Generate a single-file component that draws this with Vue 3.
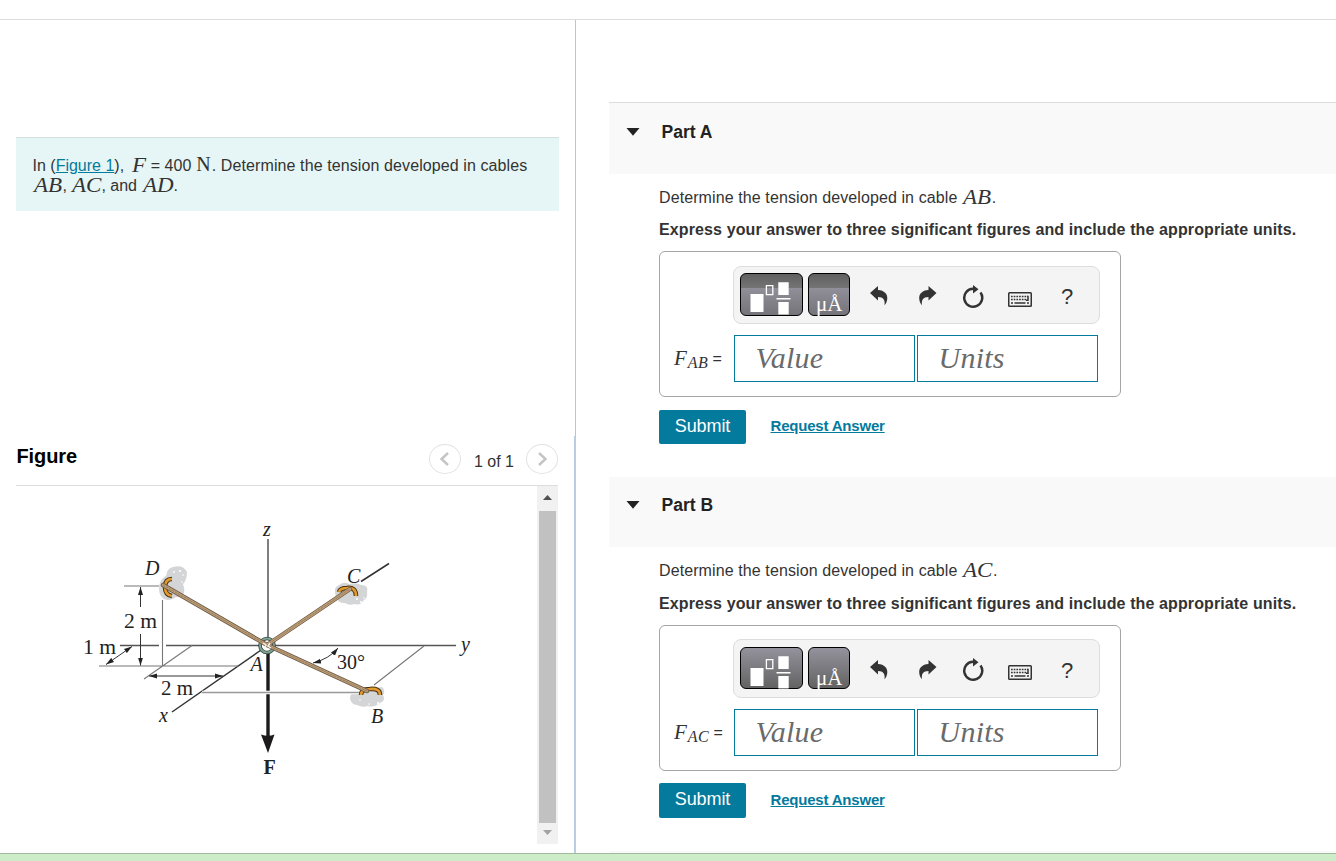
<script setup>
import { reactive } from 'vue';

const parts = reactive([
  { id: 'A', cable: 'AB', value: '', units: '', open: true },
  { id: 'B', cable: 'AC', value: '', units: '', open: true }
]);

// Collapse or expand a part
function togglePart(part) {
  part.open = !part.open;
}
</script>

<template>
  <div class="page">
    <div class="top-bar"></div>

    <div class="workspace">
      <!-- Problem statement and figure -->
      <section class="left-pane">
        <div class="problem">
          <span>In (<a href="#" class="link">Figure 1</a>),</span>
          <i class="math single">F</i>
          <span>= 400</span>
          <span class="newton">N</span><span class="rest">. Determine the tension developed in cables</span>
          <br />
          <i class="math">AB</i>, <i class="math wide">AC</i>, and <i class="math">AD</i>.
        </div>

        <div class="figure-header">
          <h2>Figure</h2>
          <div class="pager">
            <button type="button" class="pager-btn" aria-label="Previous">
              <svg width="32" height="30" viewBox="0 0 32 30"><path d="M19 9l-6.500 6 6.500 6" /></svg>
            </button>
            <span class="pager-text">1 of 1</span>
            <button type="button" class="pager-btn" aria-label="Next">
              <svg width="32" height="30" viewBox="0 0 32 30"><path d="M13 9l6.500 6-6.500 6" /></svg>
            </button>
          </div>
        </div>

        <div class="figure-view">
          <svg class="diagram" width="521" height="358" viewBox="16 486 521 358">
            <defs>
              <marker id="tip" viewBox="0 0 8 6" refX="8" refY="3" markerWidth="8" markerHeight="6" markerUnits="userSpaceOnUse" orient="auto-start-reverse">
                <path d="M0 0.500L8 3 0 5.500z" fill="#222" />
              </marker>
            </defs>

            <!-- Walls -->
            <g fill="#d3d5d7">
              <path d="M159 588q0-8 7-12 1-8 7-9 10-3 14 5 0 8-4 12 2 5 1 9-3 5-8 4-6 5-12 2-5-3-5-11z" />
              <path d="M335 593q-1-6 4-8 5-4 10-1 8-2 12 1 8 0 6 7 1 6-3 8-4 6-9 4-6 2-10-1-8 1-10-10z" />
              <path d="M350 698q0-6 8-7l24-4q4 4 1 8 3 6-3 8-6 5-12 3-6 2-11-1-6 0-7-7z" />
            </g>
            <g fill="#fff">
              <circle cx="174" cy="572" r=".9" /><circle cx="180" cy="571" r="1.100" /><circle cx="183" cy="575" r=".8" />
              <circle cx="182" cy="582" r=".8" /><circle cx="178" cy="592" r=".9" /><circle cx="357" cy="599" r="1" />
              <circle cx="361" cy="602" r="1" /><circle cx="364" cy="598" r=".8" /><circle cx="378" cy="703" r="1.100" />
              <circle cx="369" cy="704" r=".8" /><circle cx="360" cy="700" r=".8" />
            </g>

            <!-- Axes and construction lines -->
            <g stroke="#555" stroke-width="1.500" fill="none">
              <path d="M268 539V640" />
              <path d="M120 645.500H159M166 645.500H456" />
              <path d="M361 581.500L389 563.500M172 712L264 648" stroke="#333" />
            </g>
            <g stroke="#777" stroke-width="1.100" fill="none">
              <path d="M124 586H159M162.500 600V666M99 666H238M144 679L192 645.500M374 685L424 646" />
            </g>

            <!-- Dimensions -->
            <g stroke="#333" stroke-width="1" fill="none">
              <path d="M140.500 607V587" marker-end="url(#tip)" />
              <path d="M140.500 634V665.500" marker-end="url(#tip)" />
              <path d="M106 664.500L132 646.500" marker-start="url(#tip)" marker-end="url(#tip)" />
              <path d="M149 676H223" marker-start="url(#tip)" marker-end="url(#tip)" />
              <path d="M313 663Q329 659 338 648" marker-start="url(#tip)" marker-end="url(#tip)" />
            </g>

            <!-- Force -->
            <path d="M268 652V737" stroke="#1c1a1a" stroke-width="3.400" />
            <path d="M261 734.500Q268 737 274.500 734.500L268 753z" fill="#1c1a1a" />
            <path d="M202 692.500H364" stroke="#fff" stroke-width="3.500" />
            <path d="M202 692.500H364" stroke="#999" stroke-width="1.500" />

            <!-- Ring at A -->
            <circle cx="267" cy="645.500" r="7" fill="#fff" stroke="#34433f" stroke-width="3.600" />
            <circle cx="267" cy="645.500" r="7" fill="none" stroke="#7da394" stroke-width="2" />

            <!-- Anchors -->
            <g fill="none" stroke="#4a3210" stroke-width="4.600">
              <path d="M172 579q-7 0-7 8t7 9" />
              <path d="M339 592q1-4 8-4 9-1 9 8" />
              <path d="M361 695q0-6 9-6 10-1 10 6" />
            </g>
            <g fill="none" stroke="#e39a2d" stroke-width="2.600">
              <path d="M172 579q-7 0-7 8t7 9" />
              <path d="M339 592q1-4 8-4 9-1 9 8" />
              <path d="M361 695q0-6 9-6 10-1 10 6" />
            </g>

            <!-- Cables -->
            <g fill="none" stroke-linecap="round">
              <path d="M163 585L267 645L350 589M267 645L367 691" stroke="#6b5843" stroke-width="4.400" />
              <path d="M163 585L267 645L350 589M267 645L367 691" stroke="#bd9f78" stroke-width="2.800" />
              <path d="M163 585L267 645L350 589M267 645L367 691" stroke="#8f7354" stroke-width=".8" stroke-dasharray="2 1.500" />
            </g>
            <path d="M263 643l3 2-2 4M270 643l-2 3 3 2" fill="none" stroke="#f4f4f0" stroke-width="1.500" />

            <!-- Labels -->
            <g class="diagram-italic">
              <text x="263" y="536">z</text>
              <text x="145" y="575">D</text>
              <text x="347" y="583">C</text>
              <text x="250.500" y="671">A</text>
              <text x="461" y="651">y</text>
              <text x="371" y="722.500">B</text>
              <text x="159" y="722">x</text>
            </g>
            <g class="diagram-text">
              <text x="124" y="627.500" textLength="33" lengthAdjust="spacingAndGlyphs">2 m</text>
              <text x="83" y="653.500" textLength="33" lengthAdjust="spacingAndGlyphs">1 m</text>
              <text x="161" y="694.500" textLength="32" lengthAdjust="spacingAndGlyphs">2 m</text>
              <text x="337" y="669" textLength="28">30°</text>
              <text x="263.500" y="774" class="diagram-bold">F</text>
            </g>
          </svg>

          <div class="scrollbar">
            <svg width="21" height="25" viewBox="0 0 21 25"><path d="M6 14h9l-4.500-5z" fill="#505050" /></svg>
            <div class="scroll-thumb"></div>
            <svg width="21" height="21" viewBox="0 0 21 21"><path d="M6 7h9l-4.500 5z" fill="#a3a3a3" /></svg>
          </div>
        </div>
      </section>

      <div class="divider">
        <div class="divider-top"></div>
        <div class="divider-bottom"></div>
      </div>

      <!-- Answer parts -->
      <section class="right-pane">
        <article v-for="part in parts" :key="part.id" class="part" :class="'part-' + part.id.toLowerCase()">
          <header class="part-header" @click="togglePart(part)">
            <svg class="caret" width="14" height="8" viewBox="0 0 14 8"><path d="M0.500 0h13L7 7.800z" fill="#222" /></svg>
            <h3>Part {{ part.id }}</h3>
          </header>

          <div v-if="part.open" class="part-body">
            <p class="question"><span>Determine the tension developed in cable</span> <i class="math">{{ part.cable }}</i>.</p>
            <p class="instruction">Express your answer to three significant figures and include the appropriate units.</p>

            <div class="answer-box">
              <div class="toolbar">
                <button type="button" class="tool-dark templates" aria-label="Templates">
                  <svg width="61" height="41" viewBox="0 0 61 41">
                    <path d="M9.500 20h13v18h-13zM37.300 8.200h10.400v12.800h-10.400zM37.300 28h10.400v12.500h-10.400zM35.500 24h14v1.400h-14z" fill="#fff" />
                    <path d="M25.400 11.600h6.400v9h-6.400z" fill="none" stroke="#fff" stroke-width="1.300" />
                  </svg>
                </button>
                <button type="button" class="tool-dark symbols" aria-label="Symbols">
                  <svg width="40" height="41" viewBox="0 0 40 41">
                    <text x="7" y="37" textLength="26.500" lengthAdjust="spacingAndGlyphs">μÅ</text>
                  </svg>
                </button>
                <button type="button" class="tool undo" aria-label="Undo">
                  <svg width="18" height="20" viewBox="0 0 18 20"><path d="M0 7L8 0v4c6.500.4 9.300 4 9.300 8 0 3-1 5.200-2.800 7.300.7-5.400-1-8.100-6.500-8.300V14.500z" /></svg>
                </button>
                <button type="button" class="tool redo" aria-label="Redo">
                  <svg width="18" height="20" viewBox="0 0 18 20"><path d="M17.500 7L9.500 0v4C3 4.400.2 8 .2 12c0 3 1 5.200 2.800 7.300-.7-5.400 1-8.100 6.500-8.300V14.500z" /></svg>
                </button>
                <button type="button" class="tool reset" aria-label="Reset">
                  <svg width="22" height="23" viewBox="0 0 22 23">
                    <path d="M11 3.700a9 9 0 1 0 7.500 3.700" fill="none" stroke="#333" stroke-width="2.500" />
                    <path d="M11 0l5.500 4.200L11 8.500z" />
                  </svg>
                </button>
                <button type="button" class="tool keyboard" aria-label="Keyboard">
                  <svg width="24" height="15" viewBox="0 0 24 15">
                    <rect x=".75" y=".75" width="22.500" height="13.500" rx=".8" fill="none" stroke="#333" stroke-width="1.500" />
                    <path d="M3 4.500h17M3 7.500h15" fill="none" stroke="#333" stroke-width="1.600" stroke-dasharray="1.700 1" />
                    <path d="M3 11h2M6.500 11h11M19 11h2M20 3.700V8.300h-2" fill="none" stroke="#333" stroke-width="1.500" />
                  </svg>
                </button>
                <button type="button" class="tool help" aria-label="Help">?</button>
              </div>

              <div class="answer-row">
                <label class="answer-label"><i class="label-f">F</i><i class="label-sub">{{ part.cable }}</i><span>=</span></label>
                <input v-model="part.value" type="text" placeholder="Value" />
                <input v-model="part.units" type="text" placeholder="Units" />
              </div>
            </div>

            <div class="actions">
              <button type="button" class="submit">Submit</button>
              <a href="#" class="request">Request Answer</a>
            </div>
          </div>
        </article>
        <div class="next-part"></div>
      </section>
    </div>

    <div class="bottom-bar"></div>
  </div>
</template>

<style>
body {
  margin: 0;
  background-color: #fff;
  overflow: hidden;
}
</style>

<style scoped>
.page {
  width: 1336px;
  height: 861px;
  display: flex;
  flex-direction: column;
  overflow: hidden;
  font-family: "Liberation Sans", Arial, sans-serif;
  font-size: 16px;
  color: #333;
}

.page * {
  box-sizing: border-box;
}

button {
  font-family: inherit;
  padding: 0;
  border: none;
  background: none;
  cursor: pointer;
}

svg {
  display: block;
}

.top-bar {
  flex: none;
  height: 20px;
  border-bottom: 1px solid #ddd;
}

.workspace {
  flex: 1;
  min-height: 0;
  display: flex;
}

.bottom-bar {
  flex: none;
  height: 8px;
  border-top: 1px solid #9fbb9b;
  background-color: #cdecc8;
}

.left-pane {
  width: 574px;
  padding: 117px 15px 0 16px;
  display: flex;
  flex-direction: column;
}

.problem {
  height: 74px;
  padding: 18px 0 0 16.500px;
  border-top: 1px solid #d4dfdf;
  background-color: #e6f6f6;
  line-height: 20px;
  white-space: nowrap;
}

.link {
  color: #047a9c;
  text-decoration: underline;
}

.math {
  display: inline-block;
  margin: 0 4px 0 1.500px;
  font-family: "Liberation Serif", serif;
  font-size: 20px;
  line-height: 0;
  transform: translateY(0.600px) scaleX(1.150);
  transform-origin: left;
}

.math.single {
  margin: 0 7px 0 7.500px;
}

.math.wide {
  margin: 0 3.500px 0 1px;
}

.newton {
  margin-left: 5px;
  font-family: "Liberation Serif", serif;
  font-size: 20px;
  line-height: 0;
}

.rest {
  margin-left: 1px;
  letter-spacing: 0.100px;
}

.figure-header {
  height: 49px;
  margin-top: 226px;
  width: 542px;
  display: flex;
  justify-content: space-between;
  border-bottom: 1px solid #ddd;
}

.figure-header h2 {
  margin: 7px 0 0 0.500px;
  font-size: 20px;
  line-height: 24px;
  letter-spacing: -0.100px;
  color: #000;
}

.pager {
  display: flex;
  padding-top: 7px;
}

.pager-btn {
  width: 32px;
  height: 30px;
  border: 1px solid #e2e2e2;
  border-radius: 50%;
}

.pager-btn svg {
  margin: -1px;
}

.pager-btn path {
  fill: none;
  stroke: #c4c4c4;
  stroke-width: 2.400;
}

.pager-text {
  width: 65px;
  padding: 8px 0 0 1px;
  text-align: center;
  line-height: 20px;
}

.figure-view {
  width: 542px;
  height: 358px;
  display: flex;
}

.diagram {
  font-family: "Liberation Serif", serif;
  font-size: 20px;
  fill: #222;
}

.diagram-italic {
  font-style: italic;
}

.diagram-bold {
  font-weight: bold;
}

.scrollbar {
  width: 21px;
  display: flex;
  flex-direction: column;
  background-color: #f1f1f1;
}

.scroll-thumb {
  flex: 1;
  margin: 0 2px;
  background-color: #c1c1c1;
}

.divider {
  width: 2px;
  display: flex;
  flex-direction: column;
}

.divider-top {
  height: 416px;
  margin-left: 1px;
  background-color: #b9c4d4;
}

.divider-bottom {
  flex: 1;
  background-color: #b9cde2;
}

.right-pane {
  width: 760px;
  padding: 82px 0 0 33px;
}

.part-a {
  height: 375px;
}

.part-b {
  height: 373.5px;
}

.part-header {
  display: flex;
  height: 70.4px;
  padding: 18px 0 0 17px;
  background-color: #f9f9f9;
  cursor: pointer;
}

.part-a .part-header {
  height: 72px;
  padding-top: 19px;
  border-top: 1px solid #ddd;
}

.caret {
  margin-top: 6px;
}

.part-header h3 {
  margin: 0 0 0 21.500px;
  font-size: 17.500px;
  line-height: 20px;
  color: #222;
}

.part-body {
  padding-left: 50px;
}

.question {
  margin: 0;
  padding-top: 13.700px;
  line-height: 20px;
}

.question span {
  letter-spacing: 0.100px;
}

.instruction {
  margin: 0;
  padding-top: 12.600px;
  line-height: 20px;
  font-weight: bold;
  letter-spacing: 0.115px;
  white-space: nowrap;
}

.answer-box {
  width: 462px;
  height: 146px;
  margin-top: 11.100px;
  padding-top: 13.500px;
  border: 1px solid #a5a5a5;
  border-radius: 6px;
}

.toolbar {
  width: 367px;
  height: 58.400px;
  margin-left: 73px;
  padding: 6.300px 0 0 6px;
  display: flex;
  background-color: #f4f4f4;
  border: 1px solid #ddd;
  border-radius: 8px;
}

.tool-dark {
  width: 63px;
  height: 43px;
  border: 1px solid #000;
  border-radius: 6px;
  background: linear-gradient(#94929c, #636363);
}

.part-b .tool-dark {
  height: 42.400px;
}

.part-a .tool-dark {
  background: linear-gradient(#606060, #757575 14px, #918f99 14px, #74747a);
}

.tool-dark.symbols {
  width: 42px;
  margin-left: 5px;
}

.tool-dark svg {
  overflow: visible;
}

.tool-dark text {
  font-family: "Liberation Serif", serif;
  font-size: 21px;
  fill: #fff;
}

.tool {
  flex: none;
  align-self: flex-start;
  fill: #333;
}

.undo {
  margin: 13px 0 0 20px;
}

.redo {
  margin: 13px 0 0 31px;
}

.reset {
  margin: 11.700px 0 0 25px;
}

.keyboard {
  margin: 18.700px 0 0 24px;
}

.help {
  margin: 11px 0 0 29px;
  font-size: 22px;
  line-height: 25px;
  color: #333;
}

.answer-row {
  display: flex;
  height: 47px;
  margin-top: 11px;
}

.answer-label {
  width: 74px;
  padding: 12px 0 0 14px;
  display: flex;
  line-height: 24px;
}

.label-f {
  font-family: "Liberation Serif", serif;
  font-size: 21px;
  margin-top: -1px;
}

.label-sub {
  font-family: "Liberation Serif", serif;
  font-size: 16px;
  letter-spacing: 0.300px;
  margin: 4px 0 0 1px;
}

.answer-label span {
  margin-left: 4.500px;
}

.answer-row input {
  width: 181px;
  height: 47px;
  margin: 0 2px 0 0;
  padding: 0 0 1px 20.500px;
  border: 1px solid #047a9c;
  border-radius: 0;
  outline: none;
  font-family: "Liberation Serif", serif;
  font-style: italic;
  font-size: 30px;
  letter-spacing: 0.250px;
  color: #333;
}

.answer-row input::placeholder {
  color: #6a6a6a;
  opacity: 1;
}

.actions {
  display: flex;
  margin-top: 12.600px;
}

.submit {
  width: 87px;
  height: 34.400px;
  padding-bottom: 1.200px;
  border-radius: 2px;
  background-color: #047a9c;
  color: #fff;
  font-size: 18px;
  letter-spacing: -0.100px;
}

.request {
  margin: 6.300px 0 0 24.500px;
  font-size: 15px;
  line-height: 20px;
  font-weight: bold;
  letter-spacing: -0.200px;
  color: #047a9c;
}

.next-part {
  height: 10px;
  background-color: #f9f9f9;
}
</style>
